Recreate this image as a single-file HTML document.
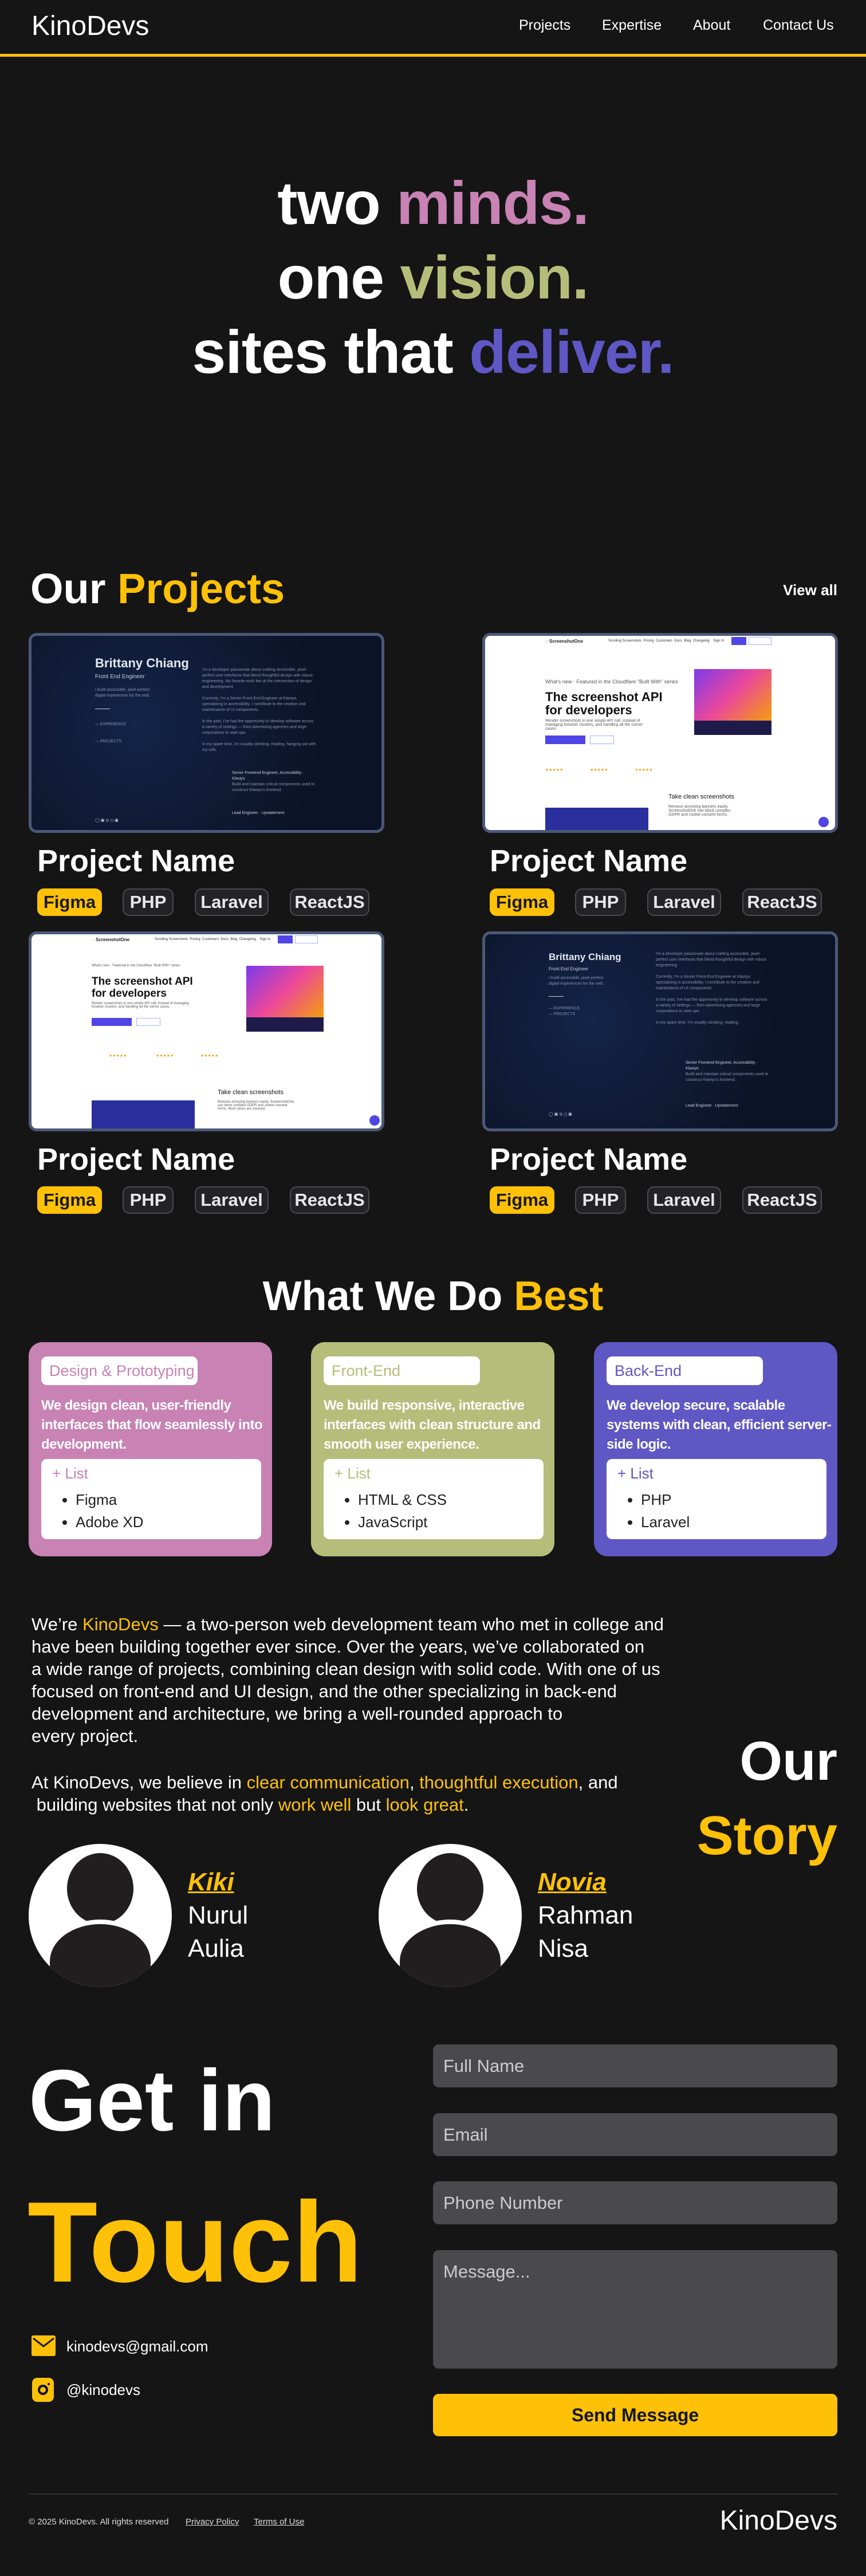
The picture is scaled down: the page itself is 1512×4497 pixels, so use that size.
<!DOCTYPE html>
<html><head><meta charset="utf-8">
<style>
*{margin:0;padding:0;box-sizing:border-box}
body{width:1512px;height:4497px;background:#151515;color:#fff;font-family:"Liberation Sans",sans-serif;position:relative;overflow:hidden}
.a{position:absolute}
.nav a{position:absolute;top:30px;font-size:25px;color:#fff;text-decoration:none}
.hero{position:absolute;left:0;width:1512px;text-align:center;font-weight:bold;font-size:106px;letter-spacing:-1px}
.card{position:absolute;width:621px;height:349px;border:5px solid #4b5878;border-radius:14px;overflow:hidden}
.pn{position:absolute;font-size:54px;font-weight:bold}
.tag{position:absolute;height:48px;line-height:44px;border-radius:12px;font-size:31px;font-weight:bold;text-align:center;border:2px solid #4a4a50;background:#232326;color:#e8e8e8}
.tag.f{background:#ffc107;color:#1a1a1a;border-color:#ffc107}
.svc{position:absolute;top:2343px;width:425px;height:374px;border-radius:24px}
.pill{position:absolute;left:22px;top:25px;height:50px;width:273px;background:#fff;border-radius:10px;font-size:27px;line-height:50px;padding-left:14px}
.desc{position:absolute;left:22px;top:94px;width:400px;font-size:24px;line-height:34px;color:#fff;font-weight:bold;letter-spacing:-0.5px}
.lb{position:absolute;left:22px;top:204px;width:384px;height:140px;background:#fff;border-radius:10px}
.lb .h{position:absolute;left:19px;top:10px;font-size:26px}
.lb ul{position:absolute;left:60px;top:52px;padding:0;font-size:26px;color:#222;line-height:39px}
.story{position:absolute;left:55px;width:1250px;font-size:31px;line-height:39px;color:#fff}
.y{color:#ffc107}
.inp{position:absolute;left:756px;width:706px;background:#4a4a4c;border-radius:10px;font-size:31px;color:#ccc;padding:20px 18px}
.av{position:absolute;width:250px;height:250px;border-radius:50%;background:#fff;overflow:hidden}
.nm{position:absolute;font-size:44px;line-height:58px}
.nm b{color:#ffc107;font-style:italic;text-decoration:underline;text-decoration-thickness:3px}
.sm{font-size:7px;color:#8892b0;line-height:10px}
</style></head><body>

<div class="a" style="left:55px;top:18px;font-size:48px">KinoDevs</div>
<div class="nav">
<a style="left:906px">Projects</a><a style="left:1051px">Expertise</a><a style="left:1210px">About</a><a style="left:1332px">Contact Us</a>
</div>
<div class="a" style="left:0;top:94px;width:1512px;height:5px;background:#ffc107"></div>

<div class="hero" style="top:295px">two <span style="color:#c882b4">minds.</span></div>
<div class="hero" style="top:425px">one <span style="color:#b5bd7a">vision.</span></div>
<div class="hero" style="top:555px">sites that <span style="color:#5f57c4">deliver.</span></div>

<div class="a" style="left:53px;top:985px;font-size:74px;font-weight:bold">Our <span class="y">Projects</span></div>
<div class="a" style="right:50px;top:1015px;font-size:26px;font-weight:bold">View all</div>

<div class="card" style="left:50px;top:1105px;background:radial-gradient(circle at 30% 45%,#132448,#0c1326 70%)">
 <div class="a" style="left:111px;top:35px;font-size:22px;font-weight:bold;color:#e2e8f0">Brittany Chiang</div>
 <div class="a" style="left:111px;top:66px;font-size:10px;color:#ccd">Front End Engineer</div>
 <div class="a sm" style="left:111px;top:90px;width:110px">I build accessible, pixel-perfect digital experiences for the web.</div>
 <div class="a" style="left:111px;top:127px;width:26px;height:1px;background:#ccd"></div>
 <div class="a sm" style="left:111px;top:150px">— EXPERIENCE<br><br><br>— PROJECTS</div>
 <div class="a sm" style="left:298px;top:55px;width:200px">I'm a developer passionate about crafting accessible, pixel-perfect user interfaces that blend thoughtful design with robust engineering. My favorite work lies at the intersection of design and development.<br><br>Currently, I'm a Senior Front-End Engineer at Klaviyo, specializing in accessibility. I contribute to the creation and maintenance of UI components.<br><br>In the past, I've had the opportunity to develop software across a variety of settings — from advertising agencies and large corporations to start-ups.<br><br>In my spare time, I'm usually climbing, reading, hanging out with my wife.</div>
 <div class="a sm" style="left:350px;top:235px;width:150px;color:#ccd">Senior Frontend Engineer, Accessibility · Klaviyo<br><span style="color:#8892b0">Build and maintain critical components used to construct Klaviyo's frontend.</span></div>
 <div class="a sm" style="left:350px;top:305px;width:150px;color:#ccd">Lead Engineer · Upstatement</div>
 <div class="a sm" style="left:111px;top:318px;color:#ccd">◯ ▣ ◎ ◻ ▣</div>
</div>

<div class="card" style="left:842px;top:1105px;background:#fff">
 <div class="a" style="left:105px;top:5px;font-size:8px;color:#222;font-weight:bold">◌ ScreenshotOne</div>
 <div class="a" style="left:215px;top:6px;font-size:6px;color:#333">Scrolling Screenshots &nbsp;Pricing &nbsp;Customers &nbsp;Docs &nbsp;Blog &nbsp;Changelog &nbsp;&nbsp; Sign In</div>
 <div class="a" style="left:430px;top:2px;width:26px;height:14px;background:#4f46e5"></div>
 <div class="a" style="left:460px;top:2px;width:40px;height:14px;border:1px solid #a5b4fc"></div>
 <div class="a" style="left:105px;top:75px;font-size:9px;color:#555">What's new · Featured in the Cloudflare "Built With" series</div>
 <div class="a" style="left:105px;top:95px;font-size:22px;font-weight:bold;color:#111;line-height:23px">The screenshot API<br>for developers</div>
 <div class="a" style="left:105px;top:145px;font-size:7px;color:#555;width:190px">Render screenshots in one simple API call, instead of managing browser clusters, and handling all the corner cases.</div>
 <div class="a" style="left:105px;top:174px;width:70px;height:15px;background:#4f46e5"></div>
 <div class="a" style="left:183px;top:174px;width:42px;height:15px;border:1px solid #a5b4fc"></div>
 <div class="a" style="left:365px;top:58px;width:135px;height:90px;background:linear-gradient(135deg,#7c3aed,#ec4899,#f59e0b)"></div>
 <div class="a" style="left:365px;top:148px;width:135px;height:25px;background:#1e1b4b"></div>
 <div class="a" style="left:105px;top:230px;font-size:7px;color:#f59e0b">★★★★★ &nbsp;&nbsp;&nbsp;&nbsp;&nbsp;&nbsp;&nbsp;&nbsp;&nbsp;&nbsp;&nbsp;&nbsp;&nbsp;&nbsp;&nbsp;&nbsp;&nbsp;&nbsp;&nbsp;&nbsp;&nbsp;&nbsp; ★★★★★ &nbsp;&nbsp;&nbsp;&nbsp;&nbsp;&nbsp;&nbsp;&nbsp;&nbsp;&nbsp;&nbsp;&nbsp;&nbsp;&nbsp;&nbsp;&nbsp;&nbsp;&nbsp;&nbsp;&nbsp;&nbsp;&nbsp; ★★★★★</div>
 <div class="a" style="left:105px;top:300px;width:180px;height:50px;background:#2a2f9e"></div>
 <div class="a" style="left:320px;top:275px;font-size:11px;color:#111">Take clean screenshots</div>
 <div class="a" style="left:320px;top:295px;font-size:7px;color:#555;width:120px">Remove annoying banners easily. ScreenshotOne can block complex GDPR and cookie consent forms.</div>
 <div class="a" style="left:582px;top:316px;width:18px;height:18px;border-radius:50%;background:#4f46e5"></div>
</div>

<div class="card" style="left:50px;top:1626px;background:#fff">
 <div class="a" style="left:105px;top:5px;font-size:8px;color:#222;font-weight:bold">◌ ScreenshotOne</div>
 <div class="a" style="left:215px;top:6px;font-size:6px;color:#333">Scrolling Screenshots &nbsp;Pricing &nbsp;Customers &nbsp;Docs &nbsp;Blog &nbsp;Changelog &nbsp;&nbsp; Sign In</div>
 <div class="a" style="left:430px;top:2px;width:26px;height:14px;background:#4f46e5"></div>
 <div class="a" style="left:460px;top:2px;width:40px;height:14px;border:1px solid #a5b4fc"></div>
 <div class="a" style="left:105px;top:52px;font-size:6px;color:#555">What's new · Featured in the Cloudflare "Built With" series</div>
 <div class="a" style="left:105px;top:72px;font-size:19px;font-weight:bold;color:#111;line-height:21px">The screenshot API<br>for developers</div>
 <div class="a" style="left:105px;top:118px;font-size:6px;color:#555;width:190px">Render screenshots in one simple API call, instead of managing browser clusters, and handling all the corner cases.</div>
 <div class="a" style="left:105px;top:146px;width:70px;height:14px;background:#4f46e5"></div>
 <div class="a" style="left:183px;top:146px;width:42px;height:14px;border:1px solid #a5b4fc"></div>
 <div class="a" style="left:375px;top:55px;width:135px;height:90px;background:linear-gradient(135deg,#7c3aed,#ec4899,#f59e0b)"></div>
 <div class="a" style="left:375px;top:145px;width:135px;height:25px;background:#1e1b4b"></div>
 <div class="a" style="left:135px;top:208px;font-size:7px;color:#f59e0b">★★★★★ &nbsp;&nbsp;&nbsp;&nbsp;&nbsp;&nbsp;&nbsp;&nbsp;&nbsp;&nbsp;&nbsp;&nbsp;&nbsp;&nbsp;&nbsp;&nbsp;&nbsp;&nbsp;&nbsp;&nbsp;&nbsp;&nbsp;&nbsp;&nbsp; ★★★★★ &nbsp;&nbsp;&nbsp;&nbsp;&nbsp;&nbsp;&nbsp;&nbsp;&nbsp;&nbsp;&nbsp;&nbsp;&nbsp;&nbsp;&nbsp;&nbsp;&nbsp;&nbsp;&nbsp;&nbsp;&nbsp;&nbsp; ★★★★★</div>
 <div class="a" style="left:105px;top:290px;width:180px;height:60px;background:#2a2f9e"></div>
 <div class="a" style="left:325px;top:270px;font-size:11px;color:#111">Take clean screenshots</div>
 <div class="a" style="left:325px;top:290px;font-size:6px;color:#555;width:140px">Remove annoying banners easily. ScreenshotOne can block complex GDPR and cookie consent forms. Most cases are covered.</div>
 <div class="a" style="left:590px;top:316px;width:18px;height:18px;border-radius:50%;background:#4f46e5"></div>
</div>

<div class="card" style="left:842px;top:1626px;background:radial-gradient(circle at 30% 45%,#132448,#0c1326 70%)">
 <div class="a" style="left:111px;top:30px;font-size:17px;font-weight:bold;color:#e2e8f0">Brittany Chiang</div>
 <div class="a" style="left:111px;top:56px;font-size:8px;color:#ccd">Front End Engineer</div>
 <div class="a sm" style="left:111px;top:72px;width:110px">I build accessible, pixel-perfect digital experiences for the web.</div>
 <div class="a" style="left:111px;top:108px;width:26px;height:1px;background:#ccd"></div>
 <div class="a sm" style="left:111px;top:125px">— EXPERIENCE<br>— PROJECTS</div>
 <div class="a sm" style="left:298px;top:30px;width:200px">I'm a developer passionate about crafting accessible, pixel-perfect user interfaces that blend thoughtful design with robust engineering.<br><br>Currently, I'm a Senior Front-End Engineer at Klaviyo, specializing in accessibility. I contribute to the creation and maintenance of UI components.<br><br>In the past, I've had the opportunity to develop software across a variety of settings — from advertising agencies and large corporations to start-ups.<br><br>In my spare time, I'm usually climbing, reading.</div>
 <div class="a sm" style="left:350px;top:220px;width:150px;color:#ccd">Senior Frontend Engineer, Accessibility · Klaviyo<br><span style="color:#8892b0">Build and maintain critical components used to construct Klaviyo's frontend.</span></div>
 <div class="a sm" style="left:350px;top:295px;width:150px;color:#ccd">Lead Engineer · Upstatement</div>
 <div class="a sm" style="left:111px;top:310px;color:#ccd">◯ ▣ ◎ ◻ ▣</div>
</div>

<div class="pn" style="left:65px;top:1472px">Project Name</div>
<div class="tag f" style="left:65px;top:1551px;width:113px">Figma</div><div class="tag" style="left:214px;top:1551px;width:89px">PHP</div><div class="tag" style="left:340px;top:1551px;width:129px">Laravel</div><div class="tag" style="left:506px;top:1551px;width:139px">ReactJS</div>
<div class="pn" style="left:855px;top:1472px">Project Name</div>
<div class="tag f" style="left:855px;top:1551px;width:113px">Figma</div><div class="tag" style="left:1004px;top:1551px;width:89px">PHP</div><div class="tag" style="left:1130px;top:1551px;width:129px">Laravel</div><div class="tag" style="left:1296px;top:1551px;width:139px">ReactJS</div>
<div class="pn" style="left:65px;top:1993px">Project Name</div>
<div class="tag f" style="left:65px;top:2071px;width:113px">Figma</div><div class="tag" style="left:214px;top:2071px;width:89px">PHP</div><div class="tag" style="left:340px;top:2071px;width:129px">Laravel</div><div class="tag" style="left:506px;top:2071px;width:139px">ReactJS</div>
<div class="pn" style="left:855px;top:1993px">Project Name</div>
<div class="tag f" style="left:855px;top:2071px;width:113px">Figma</div><div class="tag" style="left:1004px;top:2071px;width:89px">PHP</div><div class="tag" style="left:1130px;top:2071px;width:129px">Laravel</div><div class="tag" style="left:1296px;top:2071px;width:139px">ReactJS</div>

<div class="a" style="left:0;width:1512px;top:2222px;text-align:center;font-size:72px;font-weight:bold">What We Do <span class="y">Best</span></div>

<div class="svc" style="left:50px;background:#c882b4">
 <div class="pill" style="color:#c882b4">Design &amp; Prototyping</div>
 <div class="desc">We design clean, user-friendly interfaces that flow seamlessly into development.</div>
 <div class="lb"><div class="h" style="color:#c882b4">+ List</div><ul><li>Figma</li><li>Adobe XD</li></ul></div>
</div>
<div class="svc" style="left:543px;background:#b5bd7a">
 <div class="pill" style="color:#b5bd7a">Front-End</div>
 <div class="desc">We build responsive, interactive interfaces with clean structure and smooth user experience.</div>
 <div class="lb"><div class="h" style="color:#b5bd7a">+ List</div><ul><li>HTML &amp; CSS</li><li>JavaScript</li></ul></div>
</div>
<div class="svc" style="left:1037px;background:#5f57c4">
 <div class="pill" style="color:#5f57c4">Back-End</div>
 <div class="desc">We develop secure, scalable systems with clean, efficient server-side logic.</div>
 <div class="lb"><div class="h" style="color:#5f57c4">+ List</div><ul><li>PHP</li><li>Laravel</li></ul></div>
</div>

<div class="story" style="top:2816px">We’re <span class="y">KinoDevs</span> — a two-person web development team who met in college and<br>have been building together ever since. Over the years, we’ve collaborated on<br>a wide range of projects, combining clean design with solid code. With one of us<br>focused on front-end and UI design, and the other specializing in back-end<br>development and architecture, we bring a well-rounded approach to<br>every project.</div>
<div class="story" style="top:3092px">At KinoDevs, we believe in <span class="y">clear communication</span>, <span class="y">thoughtful execution</span>, and<br>&nbsp;building websites that not only <span class="y">work well</span> but <span class="y">look great</span>.</div>

<div class="a" style="right:50px;top:3020px;font-size:96px;font-weight:bold">Our</div>
<div class="a" style="right:50px;top:3150px;font-size:96px;font-weight:bold;color:#ffc107">Story</div>

<div class="av" style="left:50px;top:3219px"><div class="a" style="left:67px;top:16px;width:116px;height:124px;border-radius:50%;background:#221d1f"></div><div class="a" style="left:37px;top:140px;width:176px;height:130px;border-radius:50% 50% 30% 30%;background:#221d1f;box-shadow:0 -8px 0 #fff"></div></div>
<div class="av" style="left:661px;top:3219px"><div class="a" style="left:67px;top:16px;width:116px;height:124px;border-radius:50%;background:#221d1f"></div><div class="a" style="left:37px;top:140px;width:176px;height:130px;border-radius:50% 50% 30% 30%;background:#221d1f;box-shadow:0 -8px 0 #fff"></div></div>
<div class="nm" style="left:328px;top:3257px"><b>Kiki</b><br>Nurul<br>Aulia</div>
<div class="nm" style="left:939px;top:3257px"><b>Novia</b><br>Rahman<br>Nisa</div>

<div class="a" style="left:50px;top:3580px;font-size:152px;font-weight:bold">Get in</div>
<div class="a" style="left:48px;top:3800px;font-size:200px;font-weight:bold;color:#ffc107">Touch</div>

<svg class="a" style="left:55px;top:4077px" width="42" height="36" viewBox="0 0 42 36"><rect width="42" height="36" rx="3" fill="#ffc107"/><path d="M3 5 L21 19 L39 5" stroke="#151515" stroke-width="3" fill="none"/></svg>
<div class="a" style="left:116px;top:4081px;font-size:26px">kinodevs@gmail.com</div>
<svg class="a" style="left:56px;top:4151px" width="38" height="42" viewBox="0 0 38 42"><rect width="38" height="42" rx="9" fill="#ffc107"/><circle cx="19" cy="21" r="7" stroke="#151515" stroke-width="4" fill="none"/><circle cx="29" cy="11" r="2" fill="#151515"/></svg>
<div class="a" style="left:116px;top:4157px;font-size:26px">@kinodevs</div>

<div class="inp" style="top:3569px;height:75px">Full Name</div>
<div class="inp" style="top:3689px;height:75px">Email</div>
<div class="inp" style="top:3808px;height:75px">Phone Number</div>
<div class="inp" style="top:3928px;height:207px">Message...</div>
<div class="a" style="left:756px;top:4179px;width:706px;height:74px;background:#ffc107;border-radius:10px;text-align:center;line-height:74px;font-size:32px;font-weight:bold;color:#151515">Send Message</div>

<div class="a" style="left:50px;top:4353px;width:1412px;height:2px;background:#333"></div>
<div class="a" style="left:50px;top:4394px;font-size:15px;color:#ddd">© 2025 KinoDevs. All rights reserved</div>
<div class="a" style="left:324px;top:4394px;font-size:15px;color:#ddd;text-decoration:underline">Privacy Policy</div>
<div class="a" style="left:443px;top:4394px;font-size:15px;color:#ddd;text-decoration:underline">Terms of Use</div>
<div class="a" style="right:50px;top:4373px;font-size:48px">KinoDevs</div>

</body></html>
